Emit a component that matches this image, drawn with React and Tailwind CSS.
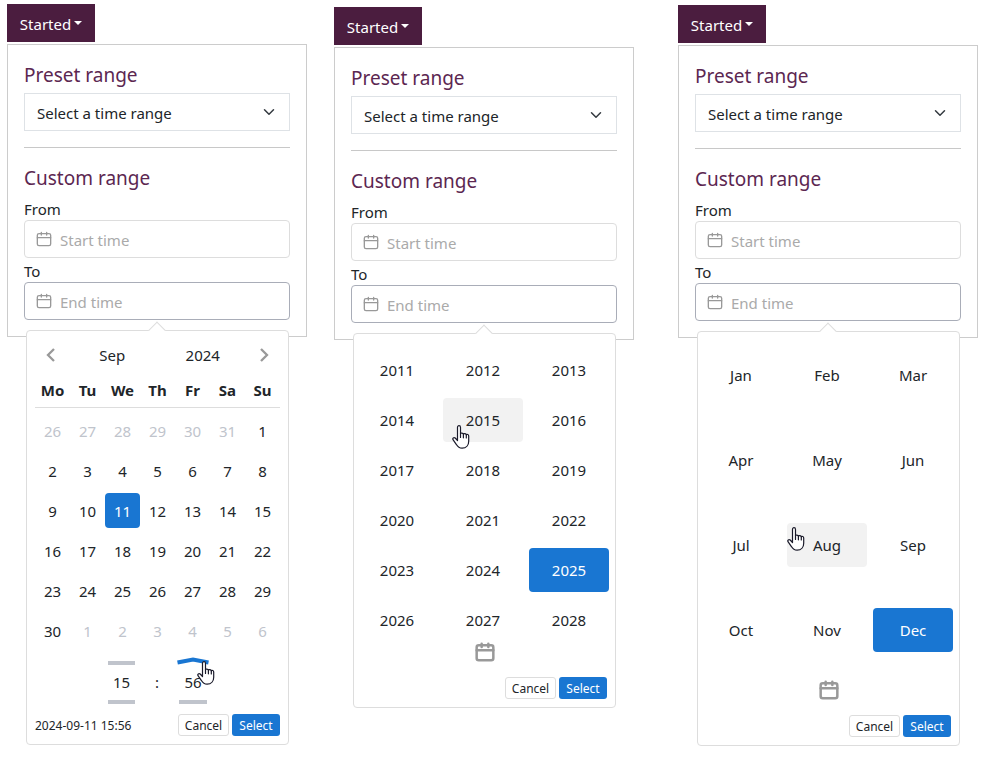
import React from "react";

const WEEKDAYS = ["Mo", "Tu", "We", "Th", "Fr", "Sa", "Su"];
const WEEKS = [
  [26, 27, 28, 29, 30, 31, 1],
  [2, 3, 4, 5, 6, 7, 8],
  [9, 10, 11, 12, 13, 14, 15],
  [16, 17, 18, 19, 20, 21, 22],
  [23, 24, 25, 26, 27, 28, 29],
  [30, 1, 2, 3, 4, 5, 6],
];
const YEARS = Array.from({ length: 18 }, (_, i) => String(2011 + i));
const MONTHS = ["Jan", "Feb", "Mar", "Apr", "May", "Jun", "Jul", "Aug", "Sep", "Oct", "Nov", "Dec"];

function CalendarIcon({ className, weight = "2" }) {
  return (
    <svg viewBox="0 0 24 24" fill="none" stroke="currentColor" strokeWidth={weight} strokeLinecap="round" className={className} aria-hidden="true">
      <rect x="2" y="4" width="20" height="18" rx="2.5" />
      <path d="M2 10h20M8 2v4M16 2v4" />
    </svg>
  );
}

function HandCursor({ className }) {
  return (
    <svg viewBox="0 0 18 24" className={className} aria-hidden="true">
      <path
        d="M5.5 15.5V2.400C5.500 1.300 6.200.700 7 .700s1.500.600 1.500 1.700v6.300c.200-1 2.600-.900 2.900.500.500-.900 2.600-.700 2.900.600.600-.800 2.400-.400 2.400 1.200v5.200c0 3.900-2.400 7-6.600 7-3 0-4.400-1.400-5.500-3.400L1 14.700c-.800-1.500.800-2.700 2.200-1.700z"
        fill="#fff"
        stroke="#1a1a2a"
        strokeWidth="1.2"
        strokeLinejoin="round"
      />
      <path d="M8.500 8.500v4M11.400 9v3.800M14.300 9.800v3.200" fill="none" stroke="#1a1a2a" strokeWidth="1.2" strokeLinecap="round" />
    </svg>
  );
}

function Chevron({ d, label }) {
  return (
    <button type="button" aria-label={label} className="flex h-8 items-center justify-center text-[#999]">
      <svg viewBox="0 0 16 16" className="size-4" fill="none" stroke="currentColor" strokeWidth="2.3" aria-hidden="true">
        <path d={d} />
      </svg>
    </button>
  );
}

function Actions({ value }) {
  return (
    <div className="flex items-center gap-[3px] px-2 pb-2 text-xs">
      <output className="flex-1 whitespace-nowrap pt-0.5">{value}</output>
      <button type="button" className="h-[22px] w-[51px] rounded-[3px] border border-[#ddd] pt-0.5">Cancel</button>
      <button type="button" className="h-[22px] w-12 rounded-[3px] bg-[#1976d2] pt-0.5 text-white">Select</button>
    </div>
  );
}

function DayPicker() {
  return (
    <>
      <div className="px-2 pt-2">
        <div className="grid grid-cols-[32px_1fr_1fr_32px]">
          <Chevron label="Previous month" d="M11 2 5 8l6 6" />
          <button type="button">Sep</button>
          <button type="button">2024</button>
          <Chevron label="Next month" d="m5 2 6 6-6 6" />
        </div>
        <table className="w-full table-fixed border-collapse">
          <thead>
            <tr className="h-9 border-b border-[#ddd]">
              {WEEKDAYS.map((d) => (
                <th key={d} className="p-0 pt-0.5 font-bold">{d}</th>
              ))}
            </tr>
          </thead>
          <tbody>
            {WEEKS.map((week, w) => (
              <tr key={w}>
                {week.map((day, i) => {
                  const outside = (w === 0 && day > 7) || (w === 5 && day < 7);
                  const selected = day === 11;
                  return (
                    <td key={i} className="p-0 pt-[5px]">
                      <button
                        type="button"
                        className={
                          "block h-[35px] w-full rounded pt-0.5 " +
                          (selected ? "bg-[#1976d2] text-white" : outside ? "text-[#c0c4cc]" : "")
                        }
                      >
                        {day}
                      </button>
                    </td>
                  );
                })}
              </tr>
            ))}
          </tbody>
        </table>
        <div className="mx-auto mt-[13px] mb-[10px] grid w-[99px] grid-cols-[27px_1fr_28px] items-center text-center">
          <button type="button" aria-label="Hour up" className="h-1 bg-[#c0c4cc]" />
          <span />
          <button type="button" aria-label="Minute up" className="relative h-1">
            <svg viewBox="0 0 32 8" className="absolute -top-1 -left-0.5 h-2 w-8 max-w-none" fill="none" stroke="#1976d2" strokeWidth="4" aria-hidden="true">
              <path d="M.5 5.5 16 2.5l15.5 3" />
            </svg>
            <HandCursor className="absolute top-0 left-[18px] z-10 h-6 w-[18px] max-w-none" />
          </button>
          <span className="leading-[35px]">15</span>
          <span>:</span>
          <span className="leading-[35px]">56</span>
          <button type="button" aria-label="Hour down" className="h-1 bg-[#c0c4cc]" />
          <span />
          <button type="button" aria-label="Minute down" className="h-1 bg-[#c0c4cc]" />
        </div>
      </div>
      <Actions value="2024-09-11 15:56" />
    </>
  );
}

function ChoicePicker({ items, selected, hovered, gridClass, iconClass, cursorClass }) {
  return (
    <>
      <div className={"grid grid-cols-3 gap-x-1.5 pr-1.5 pl-[3px] " + gridClass}>
        {items.map((item) => (
          <button
            key={item}
            type="button"
            className={
              "relative h-11 rounded pt-px " +
              (item === selected ? "bg-[#1976d2] text-white" : item === hovered ? "bg-[#f2f2f2]" : "")
            }
          >
            {item}
            {item === hovered && <HandCursor className={"absolute h-6 w-[18px] " + cursorClass} />}
          </button>
        ))}
      </div>
      <button type="button" aria-label="Show calendar" className={"mx-auto mb-[15px] block text-[#999] " + iconClass}>
        <CalendarIcon className="size-5" weight="3" />
      </button>
      <Actions value="" />
    </>
  );
}

function TimeField({ id, label, placeholder, active, children }) {
  return (
    <div>
      <label htmlFor={id} className="block pt-0.5 leading-[22px]">{label}</label>
      <div className="relative">
        <input
          id={id}
          type="text"
          placeholder={placeholder}
          className={
            "block h-[38px] w-full rounded border bg-white pt-0.5 pr-3 pl-[35px] outline-none placeholder:text-[#aaa] " +
            (active ? "border-[#a9adb8]" : "border-[#ddd]")
          }
        />
        <CalendarIcon className="pointer-events-none absolute top-[11px] left-3 size-4 text-[#999]" />
        {children}
      </div>
    </div>
  );
}

function RangeFilter({ id, className, children }) {
  return (
    <section className={"min-w-0 flex-1 " + className}>
      <button type="button" className="flex h-[38px] w-[88px] items-center justify-center gap-[3px] bg-[#4b1d3f] pt-[3px] text-white">
        Started
        <svg viewBox="0 0 8 4" className="mb-[3px] h-1 w-2" fill="currentColor" aria-hidden="true">
          <path d="M0 0h8L4 4z" />
        </svg>
      </button>
      <div className="mt-0.5 border border-[#ccc] bg-white p-4">
        <h2 className="mb-2 pt-1 text-[19px] leading-5 text-[#5c2751]">Preset range</h2>
        <div className="relative">
          <select aria-label="Preset range" className="block h-[38px] w-full appearance-none border border-[#dee2e6] bg-white px-3 pt-0.5">
            <option>Select a time range</option>
          </select>
          <svg viewBox="0 0 16 16" className="pointer-events-none absolute top-[13px] right-[13px] h-3 w-4" fill="none" stroke="#343a40" strokeWidth="2" strokeLinecap="round" strokeLinejoin="round" aria-hidden="true">
            <path d="m2 5 6 6 6-6" />
          </svg>
        </div>
        <hr className="my-4 border-[#c8c8c8]" />
        <h2 className="mb-2 pt-1 text-[19px] leading-5 text-[#5c2751]">Custom range</h2>
        <TimeField id={id + "-from"} label="From" placeholder="Start time" />
        <TimeField id={id + "-to"} label="To" placeholder="End time" active>
          <div className="absolute top-full right-px left-0.5 z-10 mt-2.5 rounded border border-[#ddd] bg-white">
            <span className="absolute -top-[7px] left-1/2 -ml-[7px] size-3 rotate-45 border-t border-l border-[#ddd] bg-white" />
            {children}
          </div>
        </TimeField>
      </div>
    </section>
  );
}

export default function App() {
  return (
    <main className="flex min-h-screen items-start bg-white pr-[22px] pl-[7px] font-['Noto_Sans',sans-serif] text-[15px] text-[#212529]">
      <RangeFilter id="day" className="mt-1">
        <DayPicker />
      </RangeFilter>
      <RangeFilter id="year" className="mt-[7px] ml-[27px]">
        <ChoicePicker
          items={YEARS}
          selected="2025"
          hovered="2015"
          gridClass="gap-y-1.5 pt-3.5"
          iconClass="mt-0"
          cursorClass="top-[27px] left-[9px]"
        />
      </RangeFilter>
      <RangeFilter id="month" className="mt-[5px] ml-11">
        <ChoicePicker
          items={MONTHS}
          selected="Dec"
          hovered="Aug"
          gridClass="gap-y-[41px] pt-[21px]"
          iconClass="mt-7"
          cursorClass="top-1 left-0"
        />
      </RangeFilter>
    </main>
  );
}
